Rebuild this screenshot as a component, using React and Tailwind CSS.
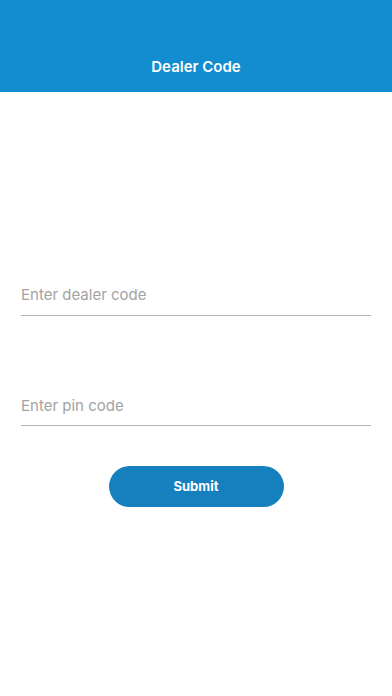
export default function App() {
  return (
    <div className="min-h-[696px] bg-white" style={{ fontFamily: 'Inter, "Liberation Sans", sans-serif' }}>
      <header className="h-[92px] bg-[#128dd0] flex items-end justify-center pb-[14px]">
        <h1 className="text-white text-[15px] font-semibold">Dealer Code</h1>
      </header>

      <main className="px-[21px] pt-[190px]">
        <div className="border-b-[1.5px] border-[#b4b4b4] pb-[8px]">
          <input
            type="text"
            placeholder="Enter dealer code"
            className="w-full text-[15px] text-gray-700 placeholder:text-[#a3a3a3] outline-none bg-transparent"
          />
        </div>
        <div className="border-b-[1.5px] border-[#b4b4b4] pb-[8px] mt-[77px]">
          <input
            type="text"
            placeholder="Enter pin code"
            className="w-full text-[15px] text-gray-700 placeholder:text-[#a3a3a3] outline-none bg-transparent"
          />
        </div>
        <div className="flex justify-center mt-[40px]">
          <button className="w-[175px] h-[41px] rounded-full bg-[#1680bf] text-white text-[13px] font-bold">
            Submit
          </button>
        </div>
      </main>
    </div>
  );
}
